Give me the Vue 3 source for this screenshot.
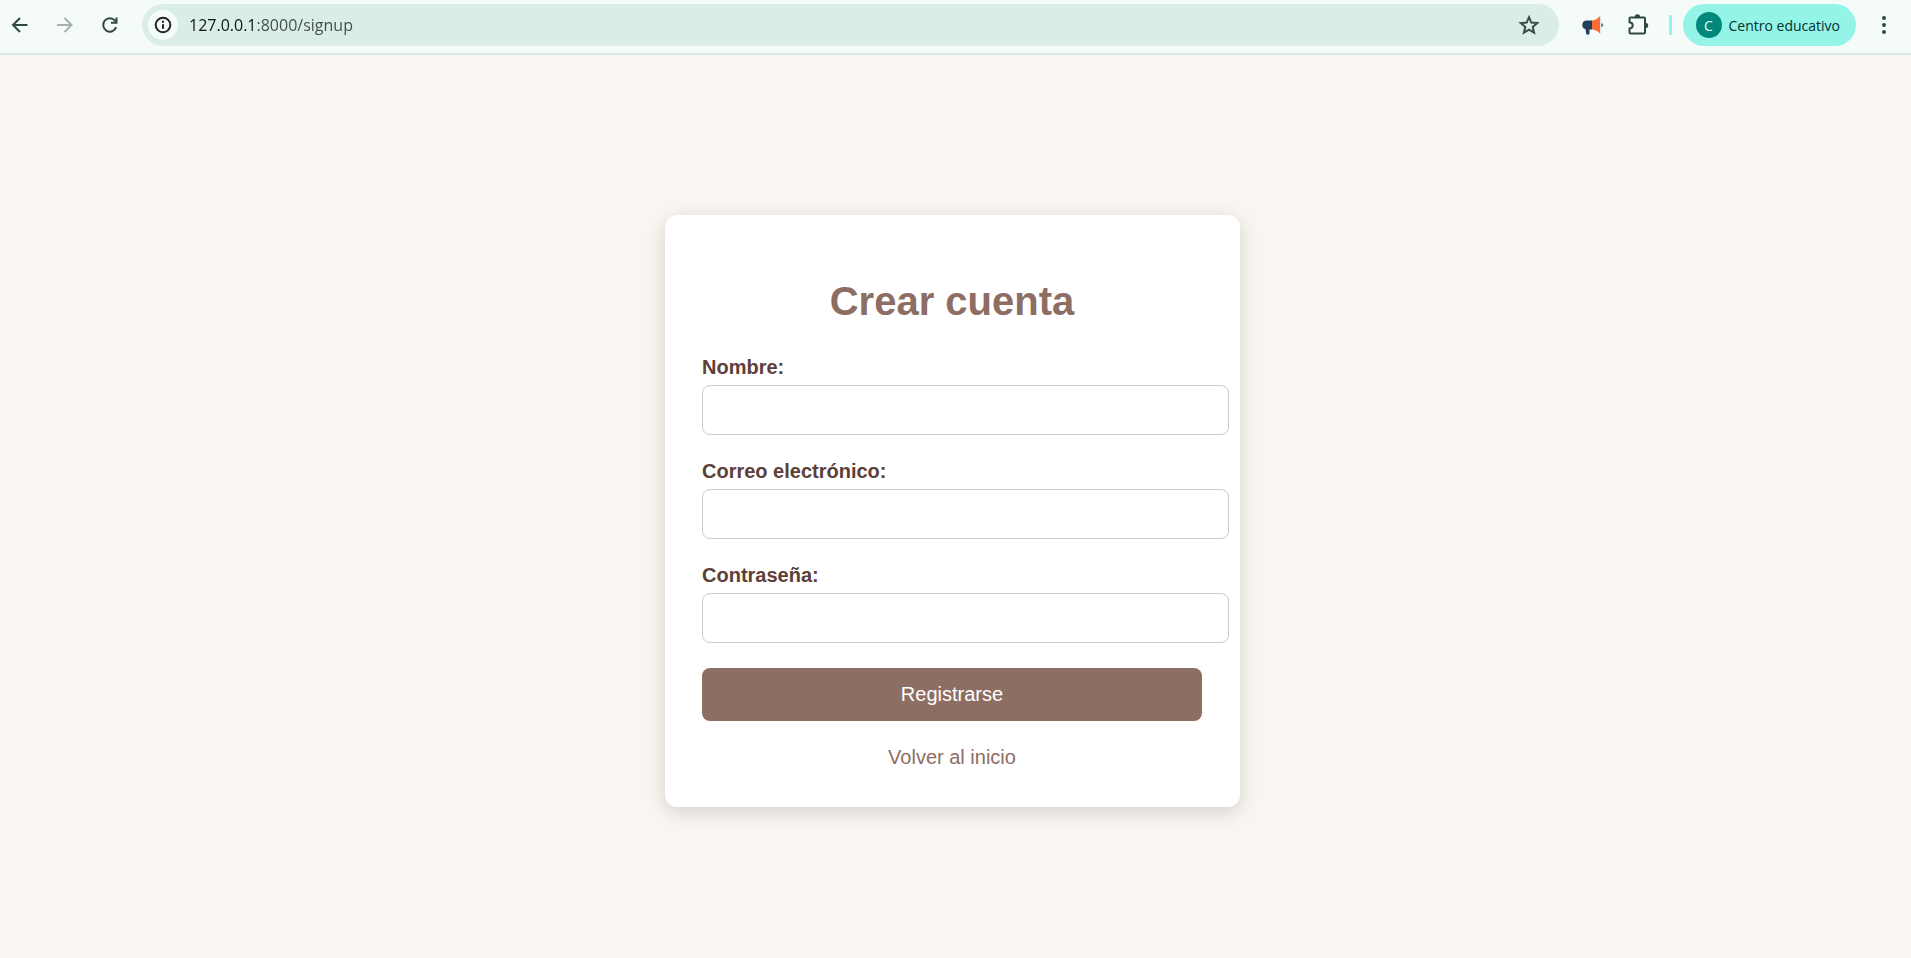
<script setup>
import { ref } from 'vue'

const address = ref('127.0.0.1:8000/signup')
const fields = [
  { id: 'name', label: 'Nombre:', type: 'text' },
  { id: 'email', label: 'Correo electrónico:', type: 'email' },
  { id: 'password', label: 'Contraseña:', type: 'password' },
]
const form = ref({ name: '', email: '', password: '' })
</script>

<template>
  <div class="browser">
    <header class="toolbar">
      <nav class="nav" aria-label="Navegación">
        <button type="button" class="tool" aria-label="Atrás">
          <svg viewBox="0 0 24 24" class="icon line"><path d="M19.5 12H5.5M12 5l-7 7 7 7" /></svg>
        </button>
        <button type="button" class="tool muted" aria-label="Adelante">
          <svg viewBox="0 0 24 24" class="icon line"><path d="M4 12h14M11.500 5l7 7-7 7" /></svg>
        </button>
        <button type="button" class="tool" aria-label="Recargar">
          <svg viewBox="0 0 24 24" class="icon line"><path d="M18.200 14.200A6.700 6.700 0 1 1 17 7.600L18.400 9.200" /><path d="M18.500 4.500v5.300h-5.500" /></svg>
        </button>
      </nav>

      <div class="address">
        <button type="button" class="info" aria-label="Información del sitio">
          <svg viewBox="0 0 24 24" class="icon line"><circle cx="12" cy="12" r="7.300" /><path d="M12 11.200v4.600M12 7.800v2" /></svg>
        </button>
        <input v-model="address" class="url" type="text" aria-label="Dirección" spellcheck="false" />
        <button type="button" class="tool star" aria-label="Añadir a marcadores">
          <svg viewBox="0 0 24 24" class="icon line"><path d="M12 4.200l2.300 5.400 5.900.5-4.500 3.900 1.400 5.700-5.100-3-5.100 3 1.400-5.700-4.500-3.900 5.900-.5z" /></svg>
        </button>
      </div>

      <div class="extensions">
        <button type="button" class="tool" aria-label="Megáfono">
          <svg viewBox="0 0 24 24" class="icon">
            <path fill="#233f5c" d="M12 7.500H6.500A4.500 4.500 0 0 0 5.500 16.300L6.200 20.500a1.700 1.700 0 0 0 3.300 0V16.500H12z" />
            <path fill="#ff6c37" d="M12 7.500c3 0 5-1.500 8-4.200v17.200c-3-2.700-5-4-8-4z" />
            <path fill="#dfe5e8" d="M20 3h1.300v18H20z" />
            <path fill="#4c6a78" d="M21.300 10.200a1.900 1.900 0 0 1 0 3.800z" />
          </svg>
        </button>
        <button type="button" class="tool" aria-label="Extensiones">
          <svg viewBox="0 0 24 24" class="icon line">
            <path d="M4.500 4.500h13.500a1 1 0 0 1 1 1v14a1 1 0 0 1-1 1H4.500a1 1 0 0 1-1-1v-4c4.300-.6 4.300-5.600 0-6.200v-3.800a1 1 0 0 1 1-1z" />
            <path class="solid" d="M8.700 4a2.700 2.700 0 0 1 5.400 0zM19.500 9.700a2.700 2.700 0 0 1 0 5.400z" />
          </svg>
        </button>
      </div>
      <span class="divider"></span>
      <button type="button" class="profile">
        <span class="avatar">C</span>
        <span>Centro educativo</span>
      </button>
      <button type="button" class="tool menu" aria-label="Menú">
        <svg viewBox="0 0 24 24" class="icon"><circle cx="12" cy="5" r="2" /><circle cx="12" cy="12" r="2" /><circle cx="12" cy="19" r="2" /></svg>
      </button>
    </header>

    <main class="page">
      <section class="card">
        <h1>Crear cuenta</h1>
        <form @submit.prevent>
          <div v-for="field in fields" :key="field.id" class="field">
            <label :for="field.id">{{ field.label }}</label>
            <input :id="field.id" v-model="form[field.id]" :type="field.type" />
          </div>
          <button type="submit" class="submit">Registrarse</button>
        </form>
        <a href="#" class="back">Volver al inicio</a>
      </section>
    </main>
  </div>
</template>

<style>
body {
  margin: 0;
  background: #f9f5f0;
}
</style>

<style scoped>
.browser {
  display: flex;
  flex-direction: column;
  min-height: 100vh;
  font-family: "Liberation Sans", Arial, sans-serif;
  font-size: 20px;
}

button {
  border: 0;
  padding: 0;
  background: none;
  font: inherit;
  cursor: pointer;
}

.toolbar {
  display: flex;
  align-items: center;
  box-sizing: border-box;
  height: 55px;
  padding: 0 15px 3px 8px;
  border-bottom: 2px solid #d8e6e0;
  background: #f5fbf9;
  color: #2f4a45;
  font-family: "Open Sans", "Noto Sans", sans-serif;
}

.nav {
  display: flex;
  gap: 21px;
  margin-right: 20px;
}

.tool {
  display: flex;
  width: 24px;
  height: 24px;
  color: inherit;
}

.muted {
  color: #a3b0ac;
}

.icon {
  display: block;
  width: 24px;
  height: 24px;
  fill: currentColor;
}

.line {
  fill: none;
  stroke: currentColor;
  stroke-width: 2;
}

.solid {
  fill: currentColor;
  stroke: none;
}

.address {
  display: flex;
  flex: 1;
  align-items: center;
  box-sizing: border-box;
  height: 42px;
  padding: 0 18px 0 6px;
  border-radius: 21px;
  background: #daede8;
}

.info {
  display: grid;
  place-items: center;
  width: 30px;
  height: 30px;
  border-radius: 50%;
  background: #f5fbf9;
  color: #1d2624;
}

.url {
  flex: 1;
  min-width: 0;
  height: 30px;
  margin-left: 11px;
  padding: 0;
  border: 0;
  outline: 0;
  background: linear-gradient(to right, #101615 68px, #414b49 68px);
  background-clip: text;
  color: transparent;
  font: 16px "Open Sans", "Noto Sans", sans-serif;
}

.star {
  color: #3c4a47;
}

.extensions {
  display: flex;
  gap: 22px;
  margin: 0 19px 0 21px;
}

.divider {
  width: 3px;
  height: 20px;
  border-radius: 1px;
  background: #93f4e7;
}

.profile {
  display: flex;
  align-items: center;
  gap: 7px;
  height: 42px;
  margin: 0 16px 0 11px;
  padding: 0 16px 0 13px;
  border-radius: 21px;
  background: #93f4e7;
  color: #06302b;
  font-size: 14px;
}

.avatar {
  display: grid;
  place-items: center;
  width: 26px;
  height: 26px;
  border-radius: 50%;
  background: #00897b;
  color: #e8fffb;
}

.page {
  display: grid;
  flex: 1;
  place-items: center;
  padding: 8px 6px 0 0;
}

.card {
  box-sizing: border-box;
  width: 100%;
  max-width: 575px;
  padding: 37px 38px 38px 37px;
  border-radius: 12px;
  background: #fff;
  box-shadow: 0 5px 19px rgba(0, 0, 0, 0.15);
  text-align: center;
}

h1 {
  margin: 26px 0 32px;
  color: #8d6e63;
  font-size: 40px;
  line-height: 46px;
}

.field {
  margin-bottom: 25px;
  text-align: left;
}

.field label {
  display: block;
  margin-bottom: 6px;
  color: #5d4037;
  font-weight: bold;
  line-height: 23px;
}

.field input {
  display: block;
  box-sizing: content-box;
  width: 100%;
  height: 24px;
  padding: 12px 12px 12px 13px;
  border: 1px solid #ccc;
  border-radius: 8px;
  background: #fff;
  font: inherit;
}

.submit {
  display: block;
  width: 100%;
  padding: 15px;
  border-radius: 8px;
  background: #8d6e63;
  color: #fff;
  line-height: 23px;
}

.back {
  display: block;
  margin-top: 25px;
  color: #8d6e63;
  line-height: 23px;
  text-decoration: none;
}
</style>
